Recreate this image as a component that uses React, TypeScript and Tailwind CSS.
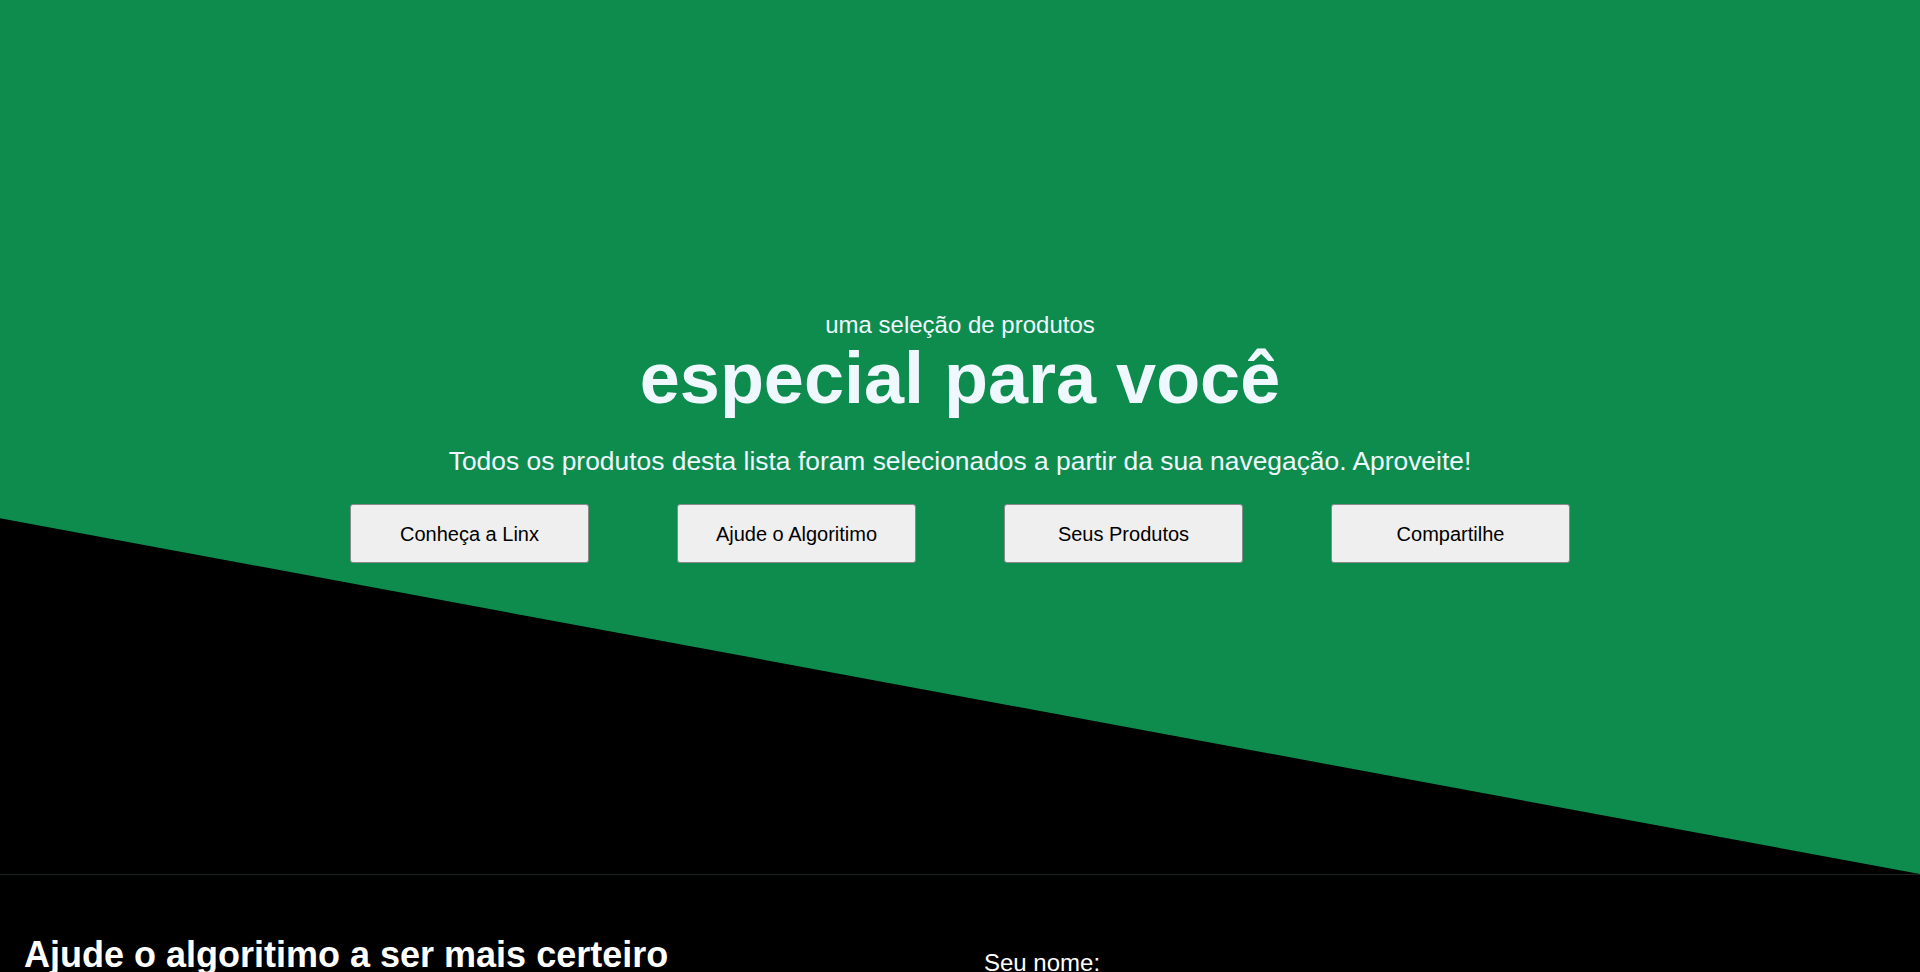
import React from 'react';

const links = ['Conheça a Linx', 'Ajude o Algoritimo', 'Seus Produtos', 'Compartilhe'];

export default function App() {
  return (
    <div className="min-h-screen bg-black font-['Liberation_Sans',Arial,sans-serif] text-[#f0f8ff]">
      {/* Hero */}
      <section className="h-[874px] bg-[#0e8c4e] [clip-path:polygon(0_0,100%_0,100%_100%,0_59.3%)] flex flex-col items-center justify-center text-center">
        <p className="text-[24px] leading-[27px]">uma seleção de produtos</p>
        <h1 className="text-[72px] font-bold leading-[80px]">especial para você</h1>
        <p className="text-[26.4px] leading-[30px] mt-[28px] mb-[28px]">
          Todos os produtos desta lista foram selecionados a partir da sua navegação. Aproveite!
        </p>
        <div className="flex gap-[88px]">
          {links.map(label => (
            <button
              key={label}
              className="w-[239px] h-[59px] bg-[#efefef] border border-[#8a8a8a] rounded-[3px] text-[20px] text-black"
            >
              {label}
            </button>
          ))}
        </div>
      </section>

      {/* Algoritmo */}
      <section className="border-t border-[#1b2323] grid grid-cols-2">
        <div className="px-6 pt-[59px]">
          <h2 className="text-[36px] font-bold leading-[41px] text-white">
            Ajude o algoritimo a ser mais certeiro
          </h2>
        </div>
        <div className="px-6 pt-[74px]">
          <label className="block text-[24px] leading-[27px] text-white">Seu nome:</label>
        </div>
      </section>
    </div>
  );
}
